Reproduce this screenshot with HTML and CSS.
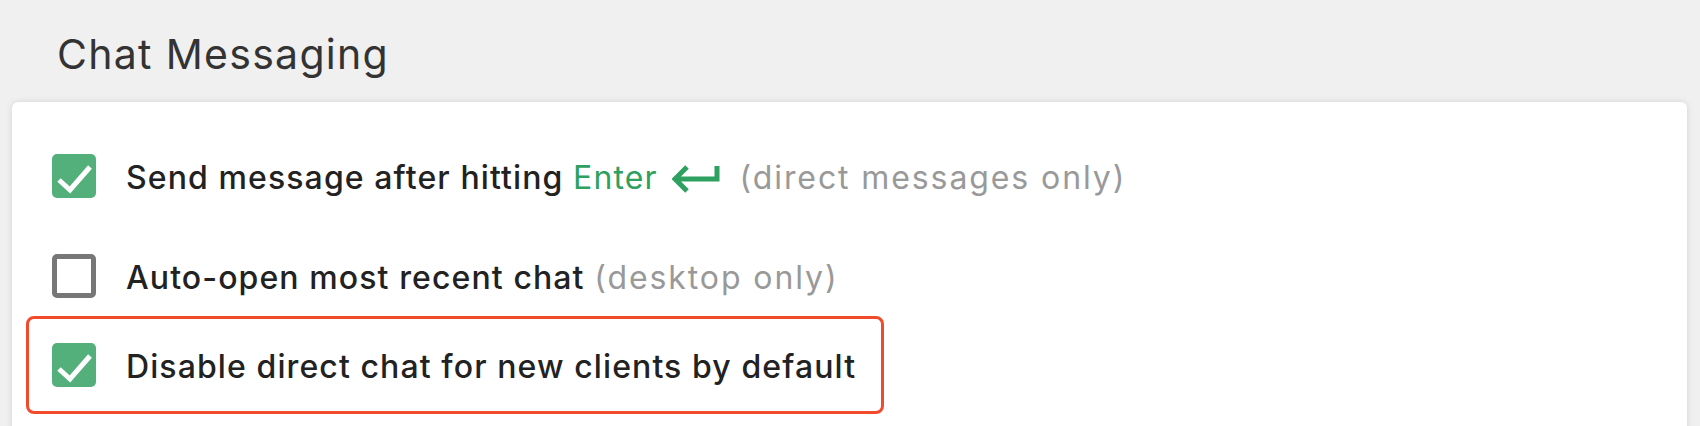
FILE: index.html
```html
<!DOCTYPE html>
<html lang="en">
<head>
    <meta charset="UTF-8">
    <meta name="viewport" content="width=device-width, initial-scale=1.0">
    <title>Chat Messaging</title>
    <link rel="stylesheet" href="styles.css">
</head>
<body>
    <h1 class="section-title">Chat Messaging</h1>

    <div class="card">
        <div class="option option-first">
            <span class="checkbox checked">
                <svg viewBox="0 0 44 44" width="44" height="44"><path d="M7 26 L18 36 L38 13" fill="none" stroke="#fff" stroke-width="5"/></svg>
            </span>
            <span class="label">Send message after hitting <span class="key">Enter</span><svg class="enter-icon" viewBox="0 0 48 28" width="48" height="28"><path d="M15 2 L3 14 L15 26 M3 14 H45 V1" fill="none" stroke="#2ea05f" stroke-width="5"/></svg><span class="note">(direct messages only)</span></span>
        </div>

        <div class="option">
            <span class="checkbox"></span>
            <span class="label">Auto-open most recent chat <span class="note">(desktop only)</span></span>
        </div>

        <div class="option highlighted">
            <span class="checkbox checked">
                <svg viewBox="0 0 44 44" width="44" height="44"><path d="M7 26 L18 36 L38 13" fill="none" stroke="#fff" stroke-width="5"/></svg>
            </span>
            <span class="label">Disable direct chat for new clients by default</span>
        </div>
    </div>
</body>
</html>
```

FILE: styles.css
```css
body {
    margin: 0;
    background: #f0f0f0;
    font-family: Inter, "Noto Sans", sans-serif;
    color: #222;
    height: 426px;
    overflow: hidden;
}
.section-title {
    margin: 0;
    padding: 32px 0 26px 57px;
    font-size: 41px;
    font-weight: 400;
    letter-spacing: 1.3px;
    line-height: 44px;
    color: #333;
}
.card {
    margin: 0 13px 0 12px;
    padding: 52px 0 40px 40px;
    background: #fff;
    border-radius: 6px 6px 0 0;
    box-shadow: 0 0 6px rgba(0, 0, 0, 0.12);
    display: flex;
    flex-direction: column;
    align-items: flex-start;
}
.option {
    display: flex;
    align-items: center;
    gap: 30px;
    height: 44px;
    font-size: 32px;
    font-weight: 500;
    letter-spacing: 1.1px;
    line-height: 44px;
}
.option + .option {
    margin-top: 56px;
}
.option.highlighted {
    margin-top: 18px;
    margin-left: -26px;
    padding: 24px 25px 24px 23px;
    border: 3px solid #f24b2b;
    border-radius: 8px;
}
.label {
    padding-top: 4px;
}
.checkbox {
    width: 44px;
    height: 44px;
    box-sizing: border-box;
    border: 5px solid #777;
    border-radius: 5px;
    flex-shrink: 0;
}
.checkbox.checked {
    border: none;
    background: #54b07b;
}
.checkbox svg {
    display: block;
}
.key {
    color: #2ea05f;
    font-weight: 400;
}
.enter-icon {
    vertical-align: -4px;
    margin: 0 20px 0 14px;
}
.note {
    color: #999;
    font-weight: 400;
    letter-spacing: 1.9px;
}
```
